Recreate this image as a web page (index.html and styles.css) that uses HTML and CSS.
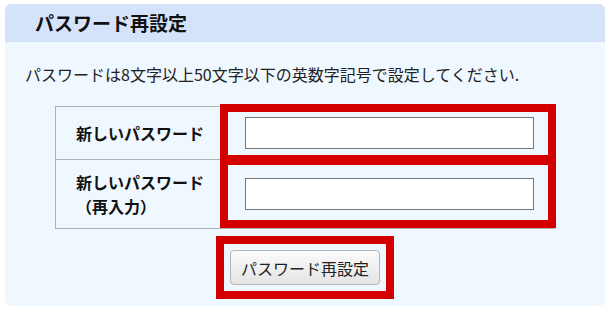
FILE: index.html
```html
<!DOCTYPE html>
<html lang="ja">
<head>
    <meta charset="UTF-8">
    <meta name="viewport" content="width=device-width, initial-scale=1.0">
    <title>パスワード再設定</title>
    <link rel="stylesheet" href="styles.css">
</head>
<body>
    <div class="panel">
        <h2 class="panel-header">パスワード再設定</h2>
        <div class="panel-body">
            <p class="note">パスワードは8文字以上50文字以下の英数字記号で設定してください.</p>
            <table class="form-table">
                <tr class="row-first">
                    <th>新しいパスワード</th>
                    <td class="marked marked-first"><input type="password" class="pw-input"></td>
                </tr>
                <tr class="row-second">
                    <th>新しいパスワード<br>（再入力）</th>
                    <td class="marked marked-second"><input type="password" class="pw-input"></td>
                </tr>
            </table>
            <div class="actions">
                <span class="btn-mark">
                    <button class="submit-btn">パスワード再設定</button>
                </span>
            </div>
        </div>
    </div>
</body>
</html>
```

FILE: styles.css
```css
body {
    margin: 0;
    font-family: "Noto Sans CJK JP", "Noto Sans", sans-serif;
    background-color: #ffffff;
    color: #222;
}
.panel {
    width: 600px;
    margin: 4px 0 0 5px;
    background-color: #eff7ff;
    border-radius: 6px;
    overflow: hidden;
}
.panel-header {
    margin: 0;
    height: 38px;
    line-height: 38px;
    padding-left: 30px;
    font-size: 19px;
    font-weight: bold;
    color: #111;
    background-color: #d5e3fa;
}
.panel-body {
    padding: 20px 0 7px;
}
.note {
    margin: 0 0 20px 20px;
    font-size: 16px;
    line-height: 24px;
}
.form-table {
    width: 500px;
    margin: 0 auto;
    border-collapse: collapse;
    border: 1px solid #b0b0b0;
}
.form-table th {
    width: 144px;
    padding: 0 0 0 20px;
    text-align: left;
    font-size: 16px;
    line-height: 24px;
    font-weight: bold;
    color: #111;
    border: 1px solid #b0b0b0;
}
.form-table td {
    padding: 0 0 0 24px;
    border: 1px solid #b0b0b0;
}
.row-first {
    height: 53px;
}
.row-second {
    height: 69px;
}
.marked {
    position: relative;
}
.marked::after {
    content: "";
    position: absolute;
    left: -1px;
    right: -2px;
    border: 8px solid #d40000;
    pointer-events: none;
}
.marked-first::after {
    top: -3px;
    bottom: -4px;
}
.marked-second::after {
    top: -3px;
    bottom: 0;
}
.pw-input {
    display: block;
    box-sizing: border-box;
    width: 289px;
    height: 32px;
    border: 1px solid #767676;
    background-color: #fff;
    padding: 2px 4px;
}
.actions {
    text-align: center;
    margin-top: 7px;
    line-height: 0;
}
.btn-mark {
    display: inline-block;
    border: 8px solid #d40000;
    padding: 6px;
}
.submit-btn {
    width: 150px;
    height: 35px;
    font-family: "Noto Sans CJK JP", "Noto Sans", sans-serif;
    font-size: 16px;
    color: #222;
    background: linear-gradient(#fbfbfb, #e4e4e4);
    border: 1px solid #b5b5b5;
    border-radius: 4px;
    padding: 0;
}
```
